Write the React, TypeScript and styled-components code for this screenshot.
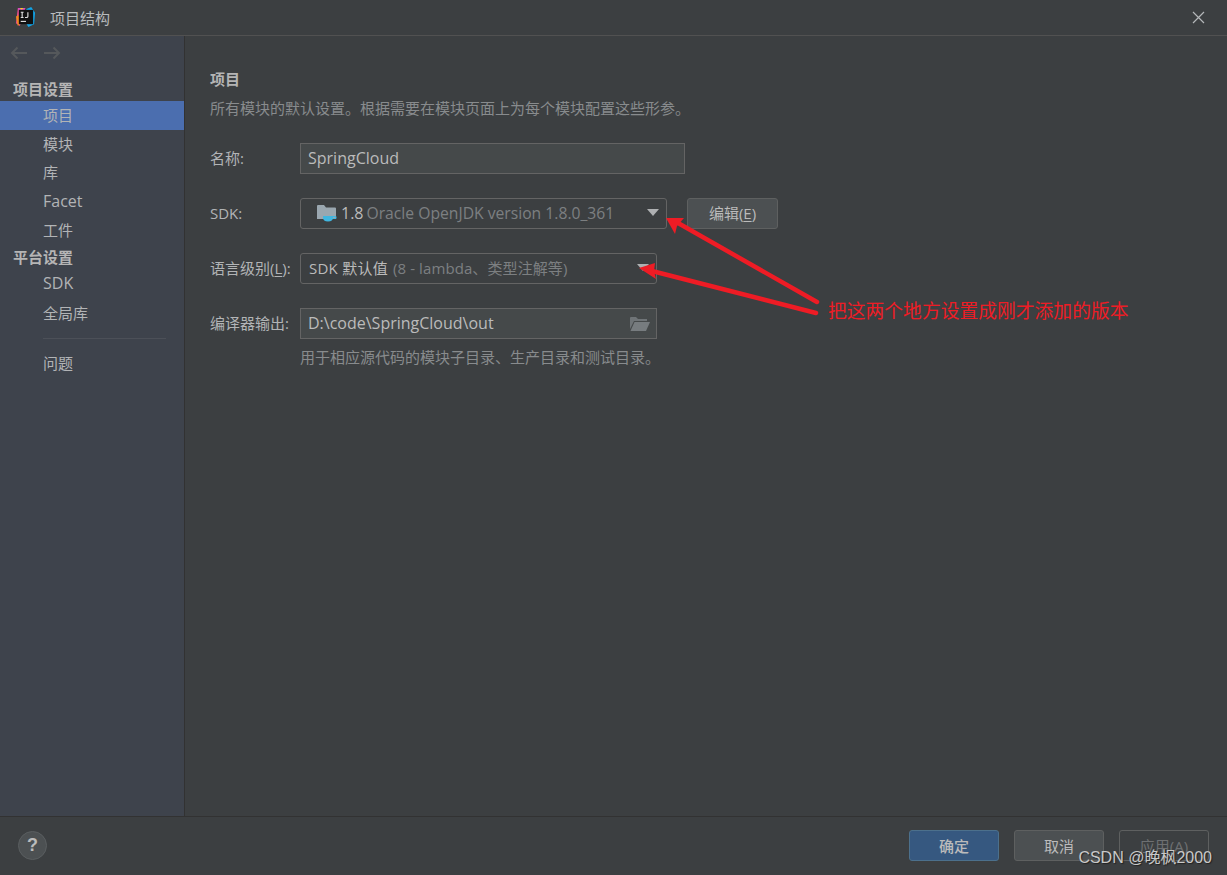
import React from "react";
import styled, { createGlobalStyle } from "styled-components";

const GlobalStyle = createGlobalStyle`
  html, body {
    margin: 0;
    padding: 0;
    height: 100%;
    background: #3c3f41;
  }
  #root {
    height: 100%;
  }
`;

const navItems = [
  { kind: "header", label: "项目设置" },
  { kind: "item", label: "项目", selected: true },
  { kind: "item", label: "模块" },
  { kind: "item", label: "库" },
  { kind: "item", label: "Facet", latin: true },
  { kind: "item", label: "工件" },
  { kind: "header", label: "平台设置" },
  { kind: "item", label: "SDK", latin: true },
  { kind: "item", label: "全局库" },
];

export default function App() {
  return (
    <Window>
      <GlobalStyle />
      <TitleBar>
        <IdeaLogo />
        <Title>项目结构</Title>
        <CloseIcon />
      </TitleBar>
      <Body>
        <Sidebar>
          <NavArrows>
            <ArrowIcon />
            <ArrowIcon $flip />
          </NavArrows>
          <NavList>
            {navItems.map((n) =>
              n.kind === "header" ? (
                <NavHeader key={n.label}>{n.label}</NavHeader>
              ) : (
                <NavItem key={n.label} $selected={n.selected} $latin={n.latin}>
                  {n.label}
                </NavItem>
              )
            )}
          </NavList>
          <NavDivider />
          <NavItem>问题</NavItem>
        </Sidebar>
        <Content>
          <Heading>项目</Heading>
          <Description>
            所有模块的默认设置。根据需要在模块页面上为每个模块配置这些形参。
          </Description>
          <Form>
            <FormRow>
              <Label>名称:</Label>
              <TextField $width={385}>SpringCloud</TextField>
            </FormRow>
            <FormRow>
              <Label>SDK:</Label>
              <Combo $width={367}>
                <SdkFolderIcon />
                <Version>1.8</Version>
                <Muted $latin>Oracle OpenJDK version 1.8.0_361</Muted>
                <Caret />
              </Combo>
              <EditButton>
                编辑(<u>E</u>)
              </EditButton>
            </FormRow>
            <FormRow>
              <Label>
                语言级别(<u>L</u>):
              </Label>
              <Combo $width={357}>
                <DefaultValue>SDK 默认值</DefaultValue>
                <Muted>(8 - lambda、类型注解等)</Muted>
                <Caret />
              </Combo>
            </FormRow>
            <FormRow>
              <Label>编译器输出:</Label>
              <TextField $width={357}>
                D:\code\SpringCloud\out
                <OpenFolderIcon />
              </TextField>
            </FormRow>
          </Form>
          <Hint>用于相应源代码的模块子目录、生产目录和测试目录。</Hint>
        </Content>
      </Body>
      <Footer>
        <HelpButton>?</HelpButton>
        <FooterButtons>
          <DialogButton $variant="primary">确定</DialogButton>
          <DialogButton>取消</DialogButton>
          <DialogButton $variant="disabled">应用(A)</DialogButton>
        </FooterButtons>
      </Footer>
      <Annotation viewBox="0 0 1227 875">
        <g fill="none" stroke="#ee1c25" strokeWidth="4.5" strokeLinecap="round">
          <path d="M817 302 L678 223" />
          <path d="M816 313 L652 271" />
        </g>
        <path d="M666 218 L684 218 L677 226 L675 234 Z" fill="#ee1c25" />
        <path d="M639 268 L655 263 L654 271 L656 279 Z" fill="#ee1c25" />
      </Annotation>
      <AnnotationText>把这两个地方设置成刚才添加的版本</AnnotationText>
      <Watermark>CSDN @晚枫2000</Watermark>
    </Window>
  );
}

function IdeaLogo() {
  return (
    <svg width="21" height="21" viewBox="0 0 22 22" style={{ flexShrink: 0 }}>
      <path d="M3 1 L9 2 L8 12 L5 20 L1 17 Z" fill="#f0508c" />
      <path d="M1 10 L5 8 L6 17 L3 20 Z" fill="#f58a1f" />
      <path d="M3 1 L11 1 L9 6 L4 6 Z" fill="#d84fc0" />
      <path d="M12 2 L17 0 L21 6 L20 18 L14 21 L11 16 Z" fill="#12a5e8" />
      <path d="M5 1 L9 1 L7 3 Z" fill="#f7d21e" />
      <rect x="4" y="3" width="15" height="15" fill="#111" />
      <rect x="6" y="14.5" width="5.5" height="1.2" fill="#ddd" />
      <path
        d="M6 5.5 H9 M7.5 5.5 V11 M6 11 H9 M13.5 5.5 V10 Q13.5 11 12 11 H10.5"
        fill="none"
        stroke="#ddd"
        strokeWidth="1.2"
      />
    </svg>
  );
}

function CloseIcon() {
  return (
    <CloseSvg width="13" height="13" viewBox="0 0 13 13">
      <path d="M1 1 L12 12 M12 1 L1 12" stroke="#b4b7b9" strokeWidth="1.2" fill="none" />
    </CloseSvg>
  );
}

function ArrowIcon(props: { $flip?: boolean }) {
  return (
    <svg width="18" height="14" viewBox="0 0 18 14" style={props.$flip ? { transform: "scaleX(-1)" } : undefined}>
      <path d="M17 7 H2 M7.5 1.5 L2 7 L7.5 12.5" fill="none" stroke="#55585b" strokeWidth="2" />
    </svg>
  );
}

function SdkFolderIcon() {
  return (
    <svg width="20" height="18" viewBox="0 0 20 18" style={{ flexShrink: 0 }}>
      <path d="M0 1 Q0 0 1 0 H7 L9 2.5 H18 Q19 2.5 19 3.5 V14 H0 Z" fill="#9aa7b0" />
      <path d="M6 11 H16 V12.5 Q16 16.5 11 16.5 Q6 16.5 6 12.5 Z" fill="#40b6e0" />
      <path d="M16 11.5 H19 V13.5 H16" fill="none" stroke="#40b6e0" strokeWidth="1" />
    </svg>
  );
}

function OpenFolderIcon() {
  return (
    <FolderSvg width="20" height="16" viewBox="0 0 20 16">
      <path d="M0 2 Q0 1 1 1 H6 L8 3 H17 V5 H4 L0 13 Z" fill="#6f7477" />
      <path d="M4.5 6 H20 L16 15 H0.5 Z" fill="#777c7f" />
    </FolderSvg>
  );
}

const Window = styled.div`
  position: relative;
  display: flex;
  flex-direction: column;
  width: 1227px;
  height: 875px;
  overflow: hidden;
  background: #3c3f41;
  color: #bbbbbb;
  font-family: "Open Sans", "Noto Sans CJK SC", sans-serif;
  font-size: 15px;
`;

const TitleBar = styled.div`
  display: flex;
  align-items: center;
  flex-shrink: 0;
  box-sizing: border-box;
  height: 36px;
  padding: 0 22px 0 15px;
  background: #3c3f41;
  border-bottom: 1px solid #515151;
`;

const Title = styled.div`
  flex: 1;
  margin-left: 14px;
  color: #b9bcbe;
`;

const CloseSvg = styled.svg`
  flex-shrink: 0;
`;

const Body = styled.div`
  display: flex;
  flex: 1;
  min-height: 0;
`;

const Sidebar = styled.div`
  box-sizing: border-box;
  flex-shrink: 0;
  width: 185px;
  background: #3e434c;
  border-right: 1px solid #323232;
`;

const NavArrows = styled.div`
  display: flex;
  align-items: center;
  gap: 15px;
  height: 33px;
  padding-left: 10px;
`;

const NavList = styled.div`
  display: flex;
  flex-direction: column;
`;

const NavHeader = styled.div`
  display: flex;
  align-items: flex-end;
  box-sizing: border-box;
  height: 32px;
  padding: 0 0 1px 13px;
  font-weight: 700;
  color: #b5b5b5;
  line-height: 22px;
  &:not(:first-child) {
    height: 25px;
    padding-bottom: 2px;
  }
`;

const NavItem = styled.div<{ $selected?: boolean; $latin?: boolean }>`
  display: flex;
  align-items: center;
  box-sizing: border-box;
  height: 28.8px;
  padding: 0 0 2px 43px;
  color: #b2b4b6;
  font-size: ${(p) => (p.$latin ? 16 : 15)}px;
  background: ${(p) => (p.$selected ? "#4b6eaf" : "transparent")};
`;

const NavDivider = styled.div`
  height: 1px;
  margin: 10px 18px 11px 43px;
  background: #4c5058;
`;

const Content = styled.div`
  flex: 1;
  padding: 31px 0 0 25px;
`;

const Heading = styled.div`
  font-weight: 700;
  line-height: 24px;
  color: #b5b5b5;
`;

const Description = styled.div`
  margin-top: 5px;
  line-height: 24px;
  color: #888b8d;
`;

const Form = styled.div`
  display: flex;
  flex-direction: column;
  gap: 24px;
  margin-top: 23px;
`;

const FormRow = styled.div`
  display: flex;
  align-items: center;
  height: 31px;
`;

const Label = styled.div`
  flex-shrink: 0;
  width: 90px;
  padding-bottom: 2px;
  color: #b2b4b6;
  u {
    text-underline-offset: 2px;
  }
`;

const TextField = styled.div<{ $width: number }>`
  display: flex;
  align-items: center;
  justify-content: space-between;
  box-sizing: border-box;
  width: ${(p) => p.$width}px;
  height: 31px;
  padding: 0 6px 2px 7px;
  background: #45494a;
  border: 1px solid #646464;
  color: #bbbbbb;
  font-size: 16px;
  svg {
    margin-top: 2px;
  }
`;

const FolderSvg = styled.svg`
  flex-shrink: 0;
`;

const Combo = styled.div<{ $width: number }>`
  display: flex;
  align-items: center;
  gap: 5px;
  box-sizing: border-box;
  width: ${(p) => p.$width}px;
  height: 31px;
  padding: 0 0 0 8px;
  border: 1px solid #646464;
  border-radius: 3px;
  background: #3c3f41;
  color: #bbbbbb;
  svg:first-child {
    margin-left: 8px;
  }
  span {
    margin-bottom: 2px;
  }
`;

const Version = styled.span`
  font-size: 16px;
  margin: 0 -2px 0 -1px;
`;

const DefaultValue = styled.span`
  letter-spacing: 0.25px;
`;

const Muted = styled.span<{ $latin?: boolean }>`
  flex: 1;
  color: #7c7f81;
  white-space: nowrap;
  font-size: ${(p) => (p.$latin ? 15.7 : 15)}px;
  letter-spacing: ${(p) => (p.$latin ? 0 : 0.1)}px;
`;

const Caret = styled.span`
  flex-shrink: 0;
  margin: 0 7px 0 0;
  width: 0;
  height: 0;
  border-left: 6px solid transparent;
  border-right: 6px solid transparent;
  border-top: 7px solid #aeb0b2;
`;

const EditButton = styled.div`
  display: flex;
  align-items: center;
  justify-content: center;
  box-sizing: border-box;
  width: 91px;
  height: 31px;
  margin-left: 20px;
  padding-bottom: 2px;
  background: #4c5052;
  border: 1px solid #5e6060;
  border-radius: 3px;
  color: #bbbbbb;
  u {
    text-underline-offset: 2px;
  }
`;

const Hint = styled.div`
  margin: 6px 0 0 90px;
  line-height: 24px;
  color: #888b8d;
`;

const Footer = styled.div`
  display: flex;
  align-items: center;
  justify-content: space-between;
  flex-shrink: 0;
  box-sizing: border-box;
  height: 59px;
  padding: 0 18px 1px;
  background: #3c3f41;
  border-top: 1px solid #323232;
`;

const HelpButton = styled.div`
  display: flex;
  align-items: center;
  justify-content: center;
  box-sizing: border-box;
  width: 29px;
  height: 29px;
  border-radius: 50%;
  background: #4c5052;
  border: 1px solid #5a5e60;
  color: #bbbbbb;
  font-family: "Liberation Sans", sans-serif;
  font-size: 18px;
  font-weight: 700;
`;

const FooterButtons = styled.div`
  display: flex;
  gap: 15px;
`;

const DialogButton = styled.div<{ $variant?: "primary" | "disabled" }>`
  display: flex;
  align-items: center;
  justify-content: center;
  box-sizing: border-box;
  width: 90px;
  height: 31px;
  border-radius: 3px;
  font-size: 15px;
  border: 1px solid ${(p) => (p.$variant === "primary" ? "#4c708c" : "#5e6060")};
  background: ${(p) =>
    p.$variant === "primary" ? "#365880" : p.$variant === "disabled" ? "transparent" : "#4c5052"};
  color: ${(p) => (p.$variant === "disabled" ? "#6e7072" : "#bbbbbb")};
  font-weight: ${(p) => (p.$variant === "primary" ? 500 : 400)};
`;

const Annotation = styled.svg`
  position: absolute;
  inset: 0;
  width: 1227px;
  height: 875px;
  pointer-events: none;
`;

const AnnotationText = styled.div`
  position: absolute;
  left: 828px;
  top: 297px;
  color: #ee1c25;
  font-family: "Noto Sans CJK SC", sans-serif;
  font-size: 18.8px;
  line-height: 26px;
  white-space: nowrap;
`;

const Watermark = styled.div`
  position: absolute;
  right: 15px;
  top: 848px;
  color: #c9c9c9;
  font-family: "Liberation Sans", "Noto Sans CJK SC", sans-serif;
  font-size: 16px;
  line-height: 20px;
  text-shadow: 1px 1px 1px #222;
  white-space: nowrap;
`;
